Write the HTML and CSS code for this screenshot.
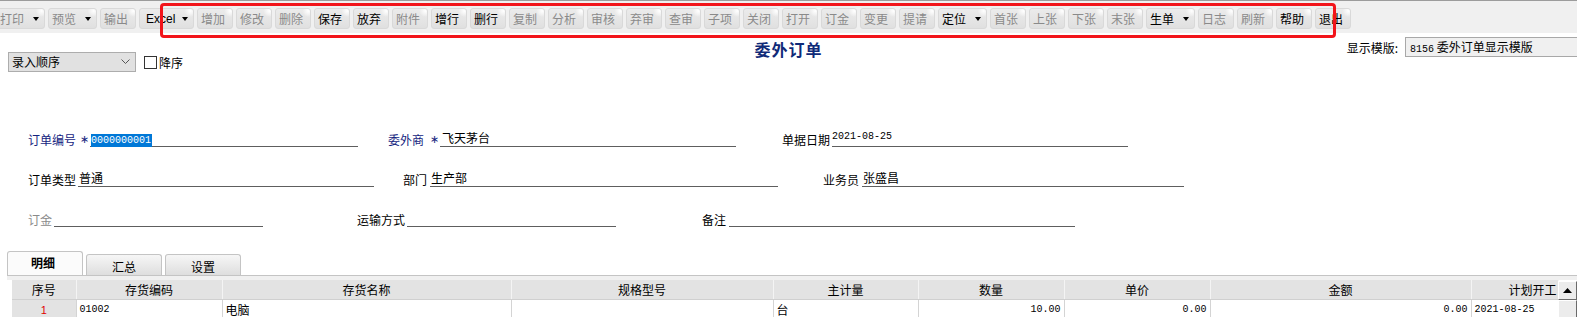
FILE: index.html
```html
<!DOCTYPE html>
<html lang="zh-CN">
<head>
<meta charset="utf-8">
<title>委外订单</title>
<link rel="stylesheet" href="styles.css">
</head>
<body>
<div class="toolbar">
  <div class="btn dd dis"><span>打印</span><i class="arr"></i></div>
  <div class="btn dd dis"><span>预览</span><i class="arr"></i></div>
  <div class="btn dis"><span>输出</span></div>
  <div class="btn dd excel"><span>Excel</span><i class="arr"></i></div>
  <div class="btn dis"><span>增加</span></div>
  <div class="btn dis"><span>修改</span></div>
  <div class="btn dis"><span>删除</span></div>
  <div class="btn"><span>保存</span></div>
  <div class="btn"><span>放弃</span></div>
  <div class="btn dis"><span>附件</span></div>
  <div class="btn"><span>增行</span></div>
  <div class="btn"><span>删行</span></div>
  <div class="btn dis"><span>复制</span></div>
  <div class="btn dis"><span>分析</span></div>
  <div class="btn dis"><span>审核</span></div>
  <div class="btn dis"><span>弃审</span></div>
  <div class="btn dis"><span>查审</span></div>
  <div class="btn dis"><span>子项</span></div>
  <div class="btn dis"><span>关闭</span></div>
  <div class="btn dis"><span>打开</span></div>
  <div class="btn dis"><span>订金</span></div>
  <div class="btn dis"><span>变更</span></div>
  <div class="btn dis"><span>提请</span></div>
  <div class="btn dd"><span>定位</span><i class="arr"></i></div>
  <div class="btn dis"><span>首张</span></div>
  <div class="btn dis"><span>上张</span></div>
  <div class="btn dis"><span>下张</span></div>
  <div class="btn dis"><span>末张</span></div>
  <div class="btn dd"><span>生单</span><i class="arr"></i></div>
  <div class="btn dis"><span>日志</span></div>
  <div class="btn dis"><span>刷新</span></div>
  <div class="btn"><span>帮助</span></div>
  <div class="btn"><span>退出</span></div>
</div>
<div class="annot"></div>

<div class="head">
  <div class="sort">
    <div class="sortsel">
      <span>录入顺序</span>
      <svg class="chev" width="9" height="6" viewBox="0 0 9 6"><path d="M0.5 0.5 L4.5 4.5 L8.5 0.5" fill="none" stroke="#555" stroke-width="1"/></svg>
    </div>
    <div class="chk"><span class="box"></span><span>降序</span></div>
  </div>
  <div class="title">委外订单</div>
  <div class="tpl">
    <span class="tpl-lbl">显示模版:</span>
    <div class="tplsel"><span class="mono">8156</span> 委外订单显示模版</div>
  </div>
</div>

<div class="form">
  <div class="row">
    <div class="fld f-code"><span class="lbl req">订单编号</span><span class="star">∗</span><span class="val"><span class="sel-text mono">0000000001</span></span></div>
    <div class="fld f-vendor"><span class="lbl req">委外商</span><span class="star">∗</span><span class="val">飞天茅台</span></div>
    <div class="fld f-date"><span class="lbl">单据日期</span><span class="val mono date">2021-08-25</span></div>
  </div>
  <div class="row">
    <div class="fld f-type"><span class="lbl">订单类型</span><span class="val">普通</span></div>
    <div class="fld f-dept"><span class="lbl">部门</span><span class="val">生产部</span></div>
    <div class="fld f-staff"><span class="lbl">业务员</span><span class="val">张盛昌</span></div>
  </div>
  <div class="row">
    <div class="fld f-dep"><span class="lbl off">订金</span><span class="val"></span></div>
    <div class="fld f-ship"><span class="lbl">运输方式</span><span class="val"></span></div>
    <div class="fld f-note"><span class="lbl">备注</span><span class="val"></span></div>
  </div>
</div>

<div class="tabs">
  <div class="tab on">明细</div>
  <div class="tab">汇总</div>
  <div class="tab">设置</div>
</div>
<div class="panel">
  <table class="grid">
    <colgroup>
      <col class="c-no"><col class="c-code"><col class="c-name"><col class="c-spec"><col class="c-unit"><col class="c-qty"><col class="c-price"><col class="c-amt"><col class="c-date">
    </colgroup>
    <thead>
      <tr><th>序号</th><th>存货编码</th><th>存货名称</th><th>规格型号</th><th>主计量</th><th>数量</th><th>单价</th><th>金额</th><th class="last">计划开工</th></tr>
    </thead>
    <tbody>
      <tr><td class="no">1</td><td class="mono">01002</td><td>电脑</td><td></td><td>台</td><td class="num mono">10.00</td><td class="num mono">0.00</td><td class="num mono">0.00</td><td class="mono dt">2021-08-25</td></tr>
    </tbody>
  </table>
  <div class="vscroll">
    <div class="sb-up"><svg width="9" height="5" viewBox="0 0 9 5"><path d="M0 5 L4.5 0 L9 5 Z" fill="#000"/></svg></div>
    <div class="sb-thumb"></div>
  </div>
</div>
</body>
</html>
```

FILE: styles.css
```css
html, body {
  margin: 0;
  padding: 0;
  overflow: hidden;
  background: #fff;
}
body {
  width: 1577px;
  height: 318px;
  position: relative;
  font-family: "Noto Sans CJK SC", "Noto Sans", sans-serif;
  font-size: 12px;
  color: #000;
}
.mono {
  font-family: "Liberation Mono", "DejaVu Sans Mono", monospace;
  font-size: 10px;
}

/* toolbar */
.toolbar {
  display: flex;
  gap: 3px;
  height: 33px;
  box-sizing: border-box;
  padding-top: 7px;
  margin-left: -4px;
  background: #f0f0f0;
  border-top: 1px solid #9c9c9c;
}
.btn {
  flex: none;
  width: 36px;
  height: 21px;
  box-sizing: border-box;
  padding-left: 3px;
  display: flex;
  align-items: center;
  border: 1px solid #d9d9d9;
  border-radius: 3px;
  background: radial-gradient(circle at 95% 10%, #ffffff 0, #f4f4f4 3px, rgba(0,0,0,0) 6px), linear-gradient(#ebebeb, #e0e0e0);
  color: #000;
  line-height: 18px;
}
.btn.dis { color: #8a8a8a; }
.btn.dd { width: 49px; }
.btn.excel { width: 55px; padding-left: 6px; }
.btn.excel span { font-family: "Liberation Sans", sans-serif; font-size: 12px; }
.arr {
  margin-left: auto;
  margin-right: 5px;
  width: 0;
  height: 0;
  border-left: 3.5px solid transparent;
  border-right: 3.5px solid transparent;
  border-top: 4px solid #000;
}

.annot {
  position: absolute;
  left: 160px;
  top: 3px;
  width: 1176px;
  height: 35px;
  box-sizing: border-box;
  border: 3px solid #f2141a;
  border-radius: 4px;
}

/* head */
.head {
  display: grid;
  grid-template-columns: 1fr auto 1fr;
  align-items: start;
  height: 39px;
}
.sort {
  display: flex;
  align-items: center;
  margin: 19px 0 0 8px;
}
.sortsel {
  width: 128px;
  height: 20px;
  box-sizing: border-box;
  border: 1px solid #adadad;
  background: #e1e1e1;
  display: flex;
  align-items: center;
  padding: 0 5px 0 3px;
  line-height: 18px;
}
.chev { margin-left: auto; }
.chk {
  display: flex;
  align-items: center;
  margin-left: 8px;
}
.chk .box {
  width: 13px;
  height: 13px;
  box-sizing: border-box;
  border: 1px solid #333;
  background: #fff;
  margin-right: 2px;
}
.title {
  margin-top: 6px;
  font-size: 16px;
  font-weight: bold;
  line-height: 20px;
  color: #0f2a78;
  letter-spacing: 1px;
}
.tpl {
  justify-self: end;
  display: flex;
  align-items: center;
  margin: 4px -12px 0 0;
}
.tpl-lbl { margin-right: 7px; }
.tplsel {
  width: 184px;
  height: 20px;
  box-sizing: border-box;
  border: 1px solid #a8a8a8;
  background: #f0f0f0;
  padding-left: 4px;
  line-height: 18px;
  white-space: nowrap;
}

/* form */
.form {
  padding-left: 28px;
  margin-top: 35px;
}
.row {
  display: flex;
  align-items: flex-end;
  height: 40px;
}
.fld {
  display: flex;
  align-items: flex-end;
}
.lbl {
  line-height: 15px;
  white-space: nowrap;
}
.lbl.req { color: #14237e; }
.lbl.off { color: #8a8a8a; }
.star {
  width: 14px;
  box-sizing: border-box;
  padding-left: 4px;
  line-height: 15px;
  color: #14237e;
  font-family: "DejaVu Sans", sans-serif;
  font-size: 11px;
}
.val {
  display: block;
  height: 16px;
  box-sizing: border-box;
  border-bottom: 1px solid #5e5e5e;
  line-height: 14px;
  padding-left: 1px;
  white-space: nowrap;
}
.val.date { line-height: 12px; }
.sel-text {
  display: inline-block;
  background: #0078d7;
  color: #fff;
  line-height: 13px;
  padding-right: 1px;
}
.f-code .val { width: 268px; }
.f-vendor { margin-left: 30px; }
.f-vendor .star { width: 16px; padding-left: 6px; }
.f-vendor .val { width: 296px; padding-left: 2px; }
.f-date { margin-left: 46px; }
.f-date .val { width: 296px; margin-left: 2px; padding-left: 0; }
.f-type .val { width: 296px; margin-left: 2px; }
.f-dept { margin-left: 29px; }
.f-dept .val { width: 348px; margin-left: 3px; }
.f-staff { margin-left: 45px; }
.f-staff .val { width: 322px; margin-left: 3px; }
.f-dep .val { width: 209px; margin-left: 2px; }
.f-ship { margin-left: 94px; }
.f-ship .val { width: 209px; margin-left: 2px; }
.f-note { margin-left: 86px; }
.f-note .val { width: 346px; margin-left: 3px; }

/* tabs */
.tabs {
  display: flex;
  align-items: flex-end;
  gap: 3px;
  margin: 24px 0 0 7px;
  height: 24px;
}
.tab {
  width: 76px;
  height: 21px;
  box-sizing: border-box;
  border: 1px solid #c4c4c4;
  border-bottom: none;
  border-radius: 3px 3px 0 0;
  background: linear-gradient(#f6f6f6, #dedede);
  text-align: center;
  padding-top: 4px;
  line-height: 16px;
}
.tab.on {
  height: 25px;
  margin-bottom: -1px;
  background: #fbfbfb;
  font-weight: bold;
  padding: 3px 4px 0 0;
  position: relative;
}

.panel {
  position: relative;
  margin-left: 7px;
  border-top: 1px solid #c4c4c4;
  padding: 4px 0 0 5px;
  background: linear-gradient(#f0f0f0 0, #f0f0f0 4px, #fff 4px);
  height: 42px;
  box-sizing: border-box;
  overflow: hidden;
}
.grid {
  border-collapse: collapse;
  table-layout: fixed;
  width: 1546px;
}
.c-no { width: 64px; }
.c-code { width: 146px; }
.c-name { width: 289px; }
.c-spec { width: 262px; }
.c-unit { width: 145px; }
.c-qty { width: 146px; }
.c-price { width: 146px; }
.c-amt { width: 261px; }
.c-date { width: 87px; }
.grid th {
  height: 19px;
  padding: 0;
  background: #e3e3e3;
  font-weight: normal;
  border-right: 1px solid #f4f4f4;
  border-bottom: 1px solid #d0d0d0;
  line-height: 18px;
  white-space: nowrap;
  overflow: hidden;
}
.grid th.last { text-align: right; padding-right: 1px; }
.grid td {
  height: 19px;
  padding: 0 3px;
  border-right: 1px solid #d4d4d4;
  line-height: 18px;
  white-space: nowrap;
  overflow: hidden;
}
.grid td.no {
  background: #e3e3e3;
  color: #e00000;
  text-align: center;
  font-family: "Liberation Sans", sans-serif;
  font-size: 11px;
}
.grid td.num { text-align: right; }
.grid td.dt { padding-left: 3px; }
.grid td.mono { font-size: 10px; }

.vscroll {
  position: absolute;
  right: 0;
  top: 5px;
  width: 19px;
  height: 37px;
  background: #f0f0f0;
}
.sb-up, .sb-thumb {
  box-sizing: border-box;
  border: 1px solid;
  border-color: #fff #6a6a6a #6a6a6a #fff;
  background: #ececec;
  height: 19px;
  display: flex;
  align-items: center;
  justify-content: center;
}
.sb-thumb { height: 18px; }
```
